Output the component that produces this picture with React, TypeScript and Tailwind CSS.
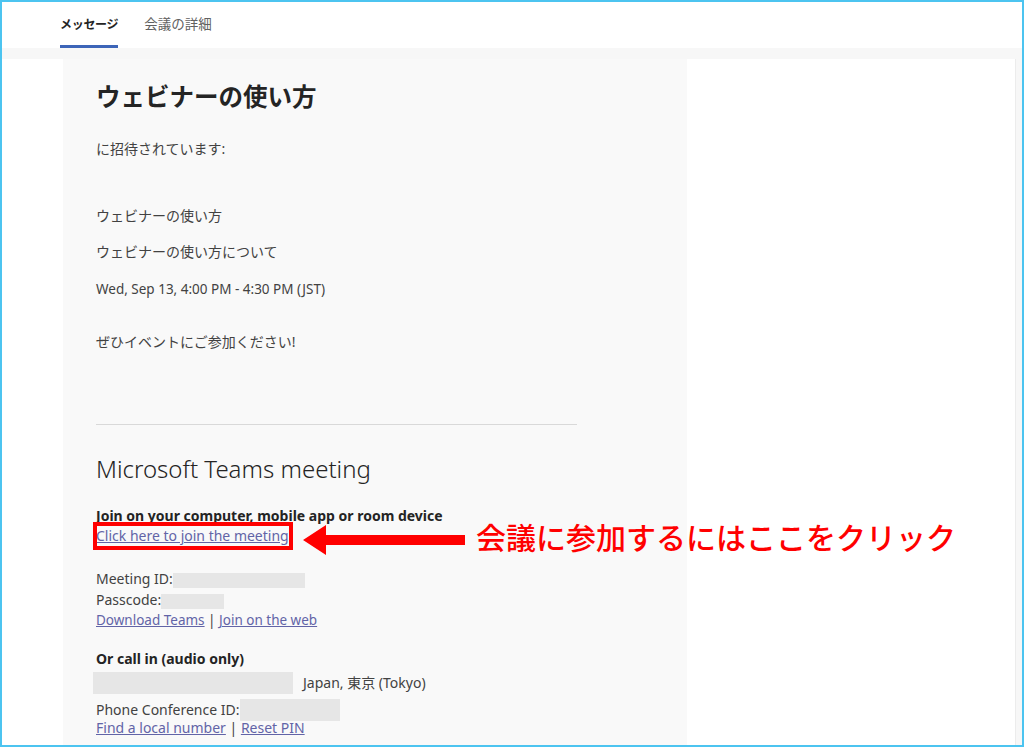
import React from 'react';

const font = { fontFamily: '"Noto Sans", "Noto Sans CJK JP", sans-serif' };

const Redacted = ({ w, h = 15 }: { w: number; h?: number }) => (
  <span className="inline-block bg-[#e6e6e6] align-middle" style={{ width: w, height: h }} />
);

export default function App() {
  return (
    <div
      className="relative w-[1024px] h-[747px] overflow-hidden border-2 border-[#4cc4f0] bg-[#f7f7f7] text-[#424242]"
      style={font}
    >
      {/* Tabs */}
      <div className="flex h-[46px] items-end gap-[26px] bg-white pl-[58px]">
        <div className="flex h-full flex-col justify-end">
          <span className="pb-[11px] text-[12px] font-semibold tracking-[-0.3px] text-[#242424]">メッセージ</span>
          <div className="h-[3px] bg-[#3d65b8]" />
        </div>
        <div className="flex h-full flex-col justify-end">
          <span className="pb-[14px] text-[13.5px] text-[#616161]">会議の詳細</span>
        </div>
      </div>

      {/* Body */}
      <div className="flex pt-[11px]">
        <div className="h-[700px] w-[61px] bg-white" />
        <div className="h-[700px] w-[624px] bg-[#f9f9f9] pl-[33px] pt-[22px] text-[14px] leading-[20px]">
          <h1 className="text-[24.5px] font-bold leading-[32px] text-[#242424]">ウェビナーの使い方</h1>
          <p className="mt-[26px]">に招待されています:</p>
          <p className="mt-[47px]">ウェビナーの使い方</p>
          <p className="mt-[16px]">ウェビナーの使い方について</p>
          <p className="mt-[17px] text-[13.5px]">Wed, Sep 13, 4:00 PM - 4:30 PM (JST)</p>
          <p className="mt-[33px]">ぜひイベントにご参加ください!</p>
          <div className="mt-[72px] h-px w-[481px] bg-[#d9d9d9]" />
          <h2 className="mt-[28px] text-[24px] font-light leading-[32px] text-[#242424]">Microsoft Teams meeting</h2>
          <p className="mt-[21px] font-bold text-[#242424]">Join on your computer, mobile app or room device</p>
          <div className="relative inline-block">
            <a className="text-[#6264a7] underline">Click here to join the meeting</a>
            <div className="absolute -left-[3px] -right-[4px] -top-[4px] -bottom-[4px] border-4 border-[#ff0000]" />
          </div>
          <p className="mt-[22px] leading-[21px]">
            Meeting ID:<Redacted w={132} />
          </p>
          <p className="leading-[21px]">
            Passcode:<Redacted w={63} />
          </p>
          <p className="text-[13.5px]">
            <a className="text-[#6264a7] underline">Download Teams</a> |{' '}
            <a className="text-[#6264a7] underline">Join on the web</a>
          </p>
          <p className="mt-[19px] font-bold text-[#242424]">Or call in (audio only)</p>
          <div className="mt-[3px] -ml-[3px] flex items-center gap-[10px]">
            <Redacted w={200} h={22} />
            <span>Japan, 東京 (Tokyo)</span>
          </div>
          <p className="mt-[5px] flex items-center">
            Phone Conference ID:<Redacted w={100} h={22} />
          </p>
          <p className="-mt-[3px]">
            <a className="text-[#6264a7] underline">Find a local number</a> |{' '}
            <a className="text-[#6264a7] underline">Reset PIN</a>
          </p>
        </div>
        <div className="h-[700px] w-[328px] bg-white" />
        <div className="h-[700px] flex-1 border-l border-[#ececec] bg-[#f7f7f7]" />
      </div>

      {/* Annotation arrow */}
      <svg className="absolute left-[301px] top-[523px]" width="162" height="30" viewBox="0 0 162 30">
        <polygon points="0,15 23,0 23,10 162,10 162,20 23,20 23,30" fill="#ff0000" />
      </svg>
      <div
        className="absolute left-[474px] top-[514px] text-[30px] font-medium leading-[40px] text-[#ff0000]"
        style={{ fontFamily: '"Noto Sans CJK JP", sans-serif' }}
      >
        会議に参加するにはここをクリック
      </div>
    </div>
  );
}
